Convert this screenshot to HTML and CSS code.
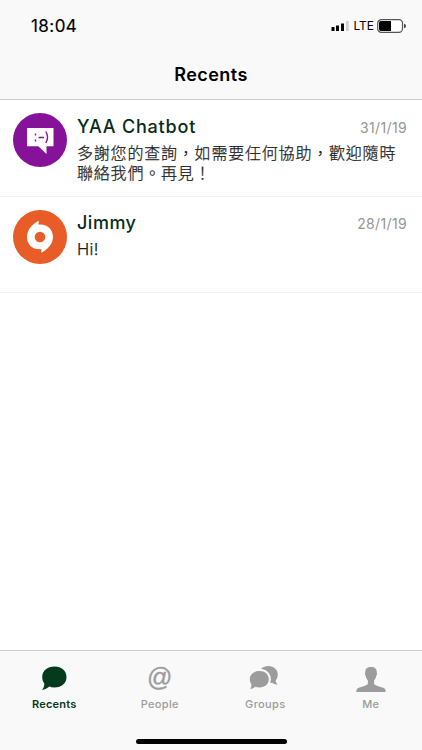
FILE: index.html
```html
<!DOCTYPE html>
<html lang="zh-Hant">
<head>
<meta charset="utf-8">
<meta name="viewport" content="width=device-width, initial-scale=1">
<title>Recents</title>
<link rel="stylesheet" href="styles.css">
</head>
<body>
<div class="app">
  <header class="header">
    <div class="status">
      <span class="time">18:04</span>
      <div class="indicators">
        <svg class="signal" width="18" height="12" viewBox="0 0 18 12"><path d="M.5 7h3v4h-3zM5 5.500h3V11H5zM10 3.500h3V11h-3z"/><path fill="#cfcfcf" d="M15 1h2.700v10H15z"/></svg>
        <span class="network">LTE</span>
        <svg class="battery" width="30" height="14" viewBox="0 0 30 14"><rect x=".7" y=".7" width="24.800" height="12.600" rx="3.600" fill="#fff" stroke="#555" stroke-width="1.200"/><path d="M4 2h10v10H4a2 2 0 0 1-2-2V4a2 2 0 0 1 2-2z"/><path fill="#444" d="M27 4.700q2 .4 2 2.300t-2 2.300z"/></svg>
      </div>
    </div>
    <h1 class="title">Recents</h1>
  </header>
  <main class="chats">
    <article class="chat">
      <svg class="avatar" viewBox="0 0 54 54"><circle cx="27" cy="27" r="27" fill="#86129a"/><path fill="#fff" d="M14 15h26.500v18.300h-7V41l-8.200-7.700H14z"/><g fill="none" stroke="#86129a" stroke-width="1.400"><path d="M22.500 20.500v2m0 4v2M25.500 24.500h5.500M32.800 18.500q3.600 5.700 0 11.400"/></g></svg>
      <div class="content">
        <div class="line"><h2 class="name name-bot">YAA Chatbot</h2><time class="date">31/1/19</time></div>
        <p class="message">多謝您的查詢，如需要任何協助，歡迎隨時聯絡我們。再見！</p>
      </div>
    </article>
    <article class="chat">
      <svg class="avatar" viewBox="0 0 54 54"><circle cx="27" cy="27" r="27" fill="#e85c27"/><path fill="#fff" fill-rule="evenodd" d="M26 10.800 25.300 14.500C34 13.500 40 19 40 27c0 6.500-5 12.500-11.800 15.800l.4-3.600C20 40.200 14 35 14 27c0-7 5-13 12-16.200zM27 21.700a5.300 5.300 0 1 0 0 10.600 5.300 5.300 0 0 0 0-10.600z"/></svg>
      <div class="content">
        <div class="line"><h2 class="name name-jimmy">Jimmy</h2><time class="date">28/1/19</time></div>
        <p class="message latin">Hi!</p>
      </div>
    </article>
  </main>
  <footer class="footer">
    <nav class="tabs">
      <a class="tab active"><svg class="icon" viewBox="0 0 32 28"><path d="M16.500 1.500c7.300 0 12 4.600 12 10.500s-4.700 10.500-12 10.500c-2 0-3.800-.3-5.300-1C9.300 23.500 6.800 24.600 4 25c1.600-1.900 2.400-4 2.300-6.500C4.900 16.700 4.200 14.500 4.200 12c0-5.900 5-10.500 12.300-10.500z"/></svg><span>Recents</span></a>
      <a class="tab"><span class="icon at">@</span><span>People</span></a>
      <a class="tab"><svg class="icon" viewBox="0 0 32 28"><path d="M10.500 6c5.500 0 9.300 3.400 9.300 8.200s-3.800 8.200-9.300 8.200c-1.600 0-2.900-.2-4.100-.7-1.400 1.300-3.200 2-5.200 2.200 1-1.500 1.400-3 1.100-4.900-1-1.300-1.500-3-1.500-4.800C.8 9.400 5 6 10.500 6z"/><path d="M12 3.800C14 1.800 16.600 1 19.500 1c5.400 0 9.300 3.600 9.300 8.500 0 2.500-.8 4.400-2.100 5.800-.1 1.600.7 3 2 4.200-2.400 0-4.200-.6-5.600-1.800l-2.100.4c.5-1 .8-2.500.8-4.100 0-5-3.700-9.400-9.800-10.200z"/></svg><span>Groups</span></a>
      <a class="tab"><svg class="icon" viewBox="0 0 32 28"><path d="M16 2c3.900 0 6.100 1.900 5.700 5.400.6.400.6 1.600-.2 2.900-.3 2.300-1.400 4-2.400 5.200v3.300c.8 2 5.900 2.800 9 4 1.900.7 2.600 1.700 2.600 4.100H1.300c0-2.400.7-3.400 2.600-4.100 3.100-1.200 8.200-2 9-4v-3.300c-1-1.200-2.100-2.900-2.400-5.200-.8-1.300-.8-2.500-.2-2.900C9.900 3.900 12.100 2 16 2z"/></svg><span>Me</span></a>
    </nav>
    <div class="home"></div>
  </footer>
</div>
</body>
</html>
```
FILE: styles.css
```css
* { box-sizing: border-box; }
body { margin: 0; background: #fff; font-family: Inter, "Noto Sans CJK TC", sans-serif; color: #000; }
h1, h2, p { margin: 0; }
.app { height: 750px; display: flex; flex-direction: column; }
.header { height: 100px; background: #f9f9f9; border-bottom: 1px solid #cdcdcd; }
.status { height: 50px; display: flex; justify-content: space-between; padding: 0 15px 0 31px; align-items: center; }
.time { font-size: 17px; line-height: 22px; letter-spacing: .45px; margin-top: 2px; -webkit-text-stroke: .15px; }
.indicators { display: flex; align-items: center; margin-top: 1px; }
.network { font-size: 12px; line-height: 16px; margin: 1px 3px 0 4px; }
.title { font-size: 18px; line-height: 24px; font-weight: 600; letter-spacing: .45px; text-align: center; margin-top: 13px; }
.chats { flex: 1; }
.chat { height: 96px; display: flex; padding: 13px 15px 0 13px; border-bottom: 1px solid #f2f2f2; }
.chat:first-child { height: 97px; }
.avatar { width: 54px; height: 54px; flex: none; }
.content { flex: 1; margin-left: 10px; }
.line { display: flex; justify-content: space-between; align-items: flex-start; height: 29px; }
.name { font-size: 18px; line-height: 27px; font-weight: 500; color: #062c18; }
.name-bot { letter-spacing: .8px; }
.name-jimmy { letter-spacing: .5px; line-height: 25px; }
.date { color: #969696; font-size: 14px; line-height: 24px; letter-spacing: .35px; margin-top: 3px; }
.name-jimmy + .date { margin-top: 2px; }
.message { font-size: 16px; line-height: 20px; letter-spacing: .8px; color: #1c1c1c; font-family: "Noto Sans CJK TC", sans-serif; font-weight: 300; -webkit-text-stroke: .25px #1c1c1c; }
.latin { font-family: Inter, sans-serif; font-size: 16.5px; letter-spacing: .4px; }
.footer { height: 100px; background: #f9f9f9; border-top: 1px solid #cdcdcd; }
.tabs { height: 88px; display: grid; grid-template-columns: repeat(4, 1fr); }
.tab { display: flex; flex-direction: column; align-items: center; padding: 14px 0 0 3px; color: #9c9c9c; font-size: 11px; line-height: 15px; font-weight: 500; letter-spacing: .35px; }
.icon { width: 32px; height: 28px; fill: currentColor; margin-bottom: 4px; }
.tab.active { color: #063a1d; font-weight: 600; letter-spacing: .2px; }
.at { font-size: 25px; line-height: 25px; letter-spacing: 0; font-weight: 400; font-family: "Liberation Sans", sans-serif; text-align: center; -webkit-text-stroke: .3px; }
.home { width: 151px; height: 5px; margin: 0 auto; border-radius: 3px; background: #000; }
```
